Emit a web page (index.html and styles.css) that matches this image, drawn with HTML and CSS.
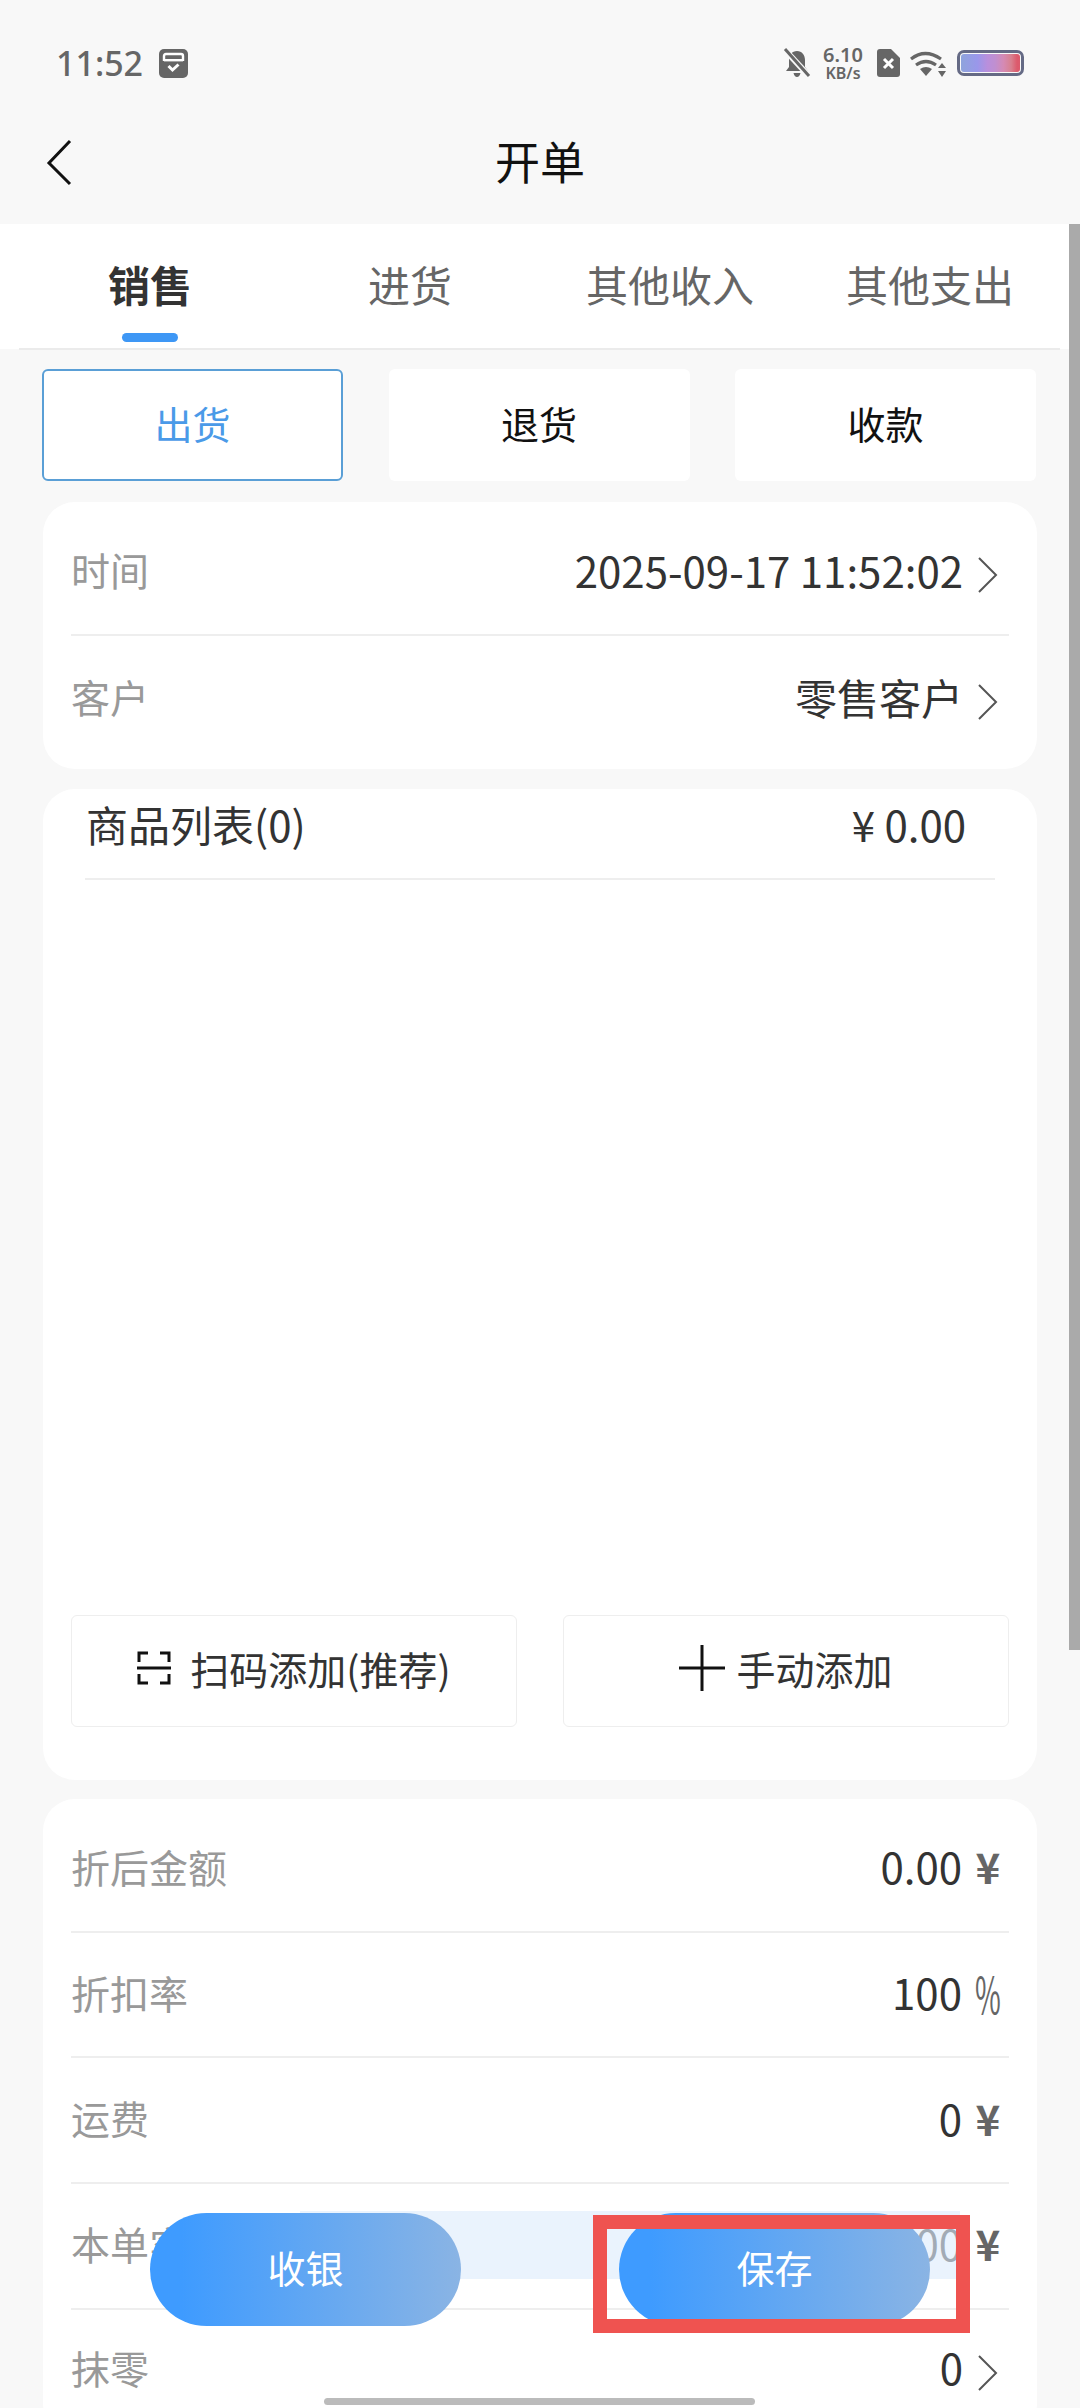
FILE: index.html
```html
<!DOCTYPE html>
<html lang="zh-CN">
<head>
    <meta charset="UTF-8">
    <meta name="viewport" content="width=device-width, initial-scale=1.0">
    <title>开单</title>
    <link rel="stylesheet" href="styles.css">
</head>
<body>
<div class="page">

    <div class="status">
        <div class="status-left">
            <span class="clock">11:52</span>
            <svg class="ic-box" width="29" height="29" viewBox="0 0 29 29">
                <rect width="29" height="29" rx="5" fill="#666"/>
                <path d="M5 12V7q0-2 2-2h15q2 0 2 2v5" fill="none" stroke="#fff" stroke-width="2.4"/>
                <rect x="5" y="10" width="19" height="2.4" fill="#fff"/>
                <path d="M9.5 17l4 4 6-5.5" fill="none" stroke="#fff" stroke-width="3"/>
            </svg>
        </div>
        <div class="status-right">
            <svg class="ic-bell" width="28" height="30" viewBox="0 0 28 30">
                <path d="M14 3c5 0 8 4 8 9v7l3 4H3l3-4v-7c0-5 3-9 8-9zM10.5 25h7q-1 4-3.500 4t-3.500-4z" fill="#666"/>
                <path d="M2 2l24 26" stroke="#f8f8f8" stroke-width="6"/>
                <path d="M2 1l24 27" stroke="#666" stroke-width="3"/>
            </svg>
            <div class="speed"><span class="speed-num">6.10</span><span class="speed-unit">KB/s</span></div>
            <svg class="ic-sim" width="23" height="28" viewBox="0 0 23 28">
                <path d="M3 0h11l9 9v16q0 3-3 3H3q-3 0-3-3V3q0-3 3-3z" fill="#666"/>
                <path d="M7 10l9 9M16 10l-9 9" stroke="#fff" stroke-width="3"/>
            </svg>
            <svg class="ic-wifi" width="36" height="27" viewBox="0 0 36 27">
                <g fill="none" stroke="#666" stroke-width="3.200">
                    <path d="M1 9q14-11 30 0"/>
                    <path d="M6 15q10-7 20 0"/>
                </g>
                <path d="M10 19q6-4 12 0l-6 7z" fill="#666"/>
                <path d="M32 13l4 5h-8zM32 27l4-6h-8z" fill="#666"/>
            </svg>
            <div class="battery"><div class="battery-fill"></div></div>
        </div>
    </div>

    <div class="nav">
        <svg class="back" width="26" height="47" viewBox="0 0 26 47">
            <path d="M24 2L3 24l21 21" fill="none" stroke="#111" stroke-width="3"/>
        </svg>
        <span class="nav-title">开单</span>
    </div>

    <div class="tabs">
        <div class="tab tab-on">销售<i class="tab-line"></i></div>
        <div class="tab">进货</div>
        <div class="tab">其他收入</div>
        <div class="tab">其他支出</div>
    </div>

    <div class="subtabs">
        <div class="subtab subtab-on">出货</div>
        <div class="subtab">退货</div>
        <div class="subtab">收款</div>
    </div>

    <div class="card card-top">
        <div class="row">
            <span class="label">时间</span>
            <span class="value">2025-09-17 11:52:02<svg class="chev" width="21" height="36" viewBox="0 0 21 36"><path d="M2 1l17 17L2 35" fill="none" stroke="#555" stroke-width="2"/></svg></span>
        </div>
        <div class="row row-last">
            <span class="label">客户</span>
            <span class="value">零售客户<svg class="chev" width="21" height="36" viewBox="0 0 21 36"><path d="M2 1l17 17L2 35" fill="none" stroke="#555" stroke-width="2"/></svg></span>
        </div>
    </div>

    <div class="card card-goods">
        <div class="goods-head">
            <span>商品列表(0)</span>
            <span>¥ 0.00</span>
        </div>
        <div class="goods-btns">
            <div class="add-btn add-scan">
                <svg width="34" height="34" viewBox="0 0 34 34">
                    <path d="M11 2H2v9M23 2h9v9M11 32H2v-9M23 32h9v-9" fill="none" stroke="#111" stroke-width="3"/>
                    <path d="M0 17h34" stroke="#111" stroke-width="3"/>
                </svg>
                扫码添加(推荐)
            </div>
            <div class="add-btn add-manual">
                <svg width="46" height="46" viewBox="0 0 46 46">
                    <path d="M0 23h46M23 0v46" stroke="#111" stroke-width="3"/>
                </svg>
                手动添加
            </div>
        </div>
    </div>

    <div class="card card-sum">
        <div class="row row-sum">
            <span class="label">折后金额</span>
            <span class="value">0.00<span class="unit">¥</span></span>
        </div>
        <div class="row row-sum">
            <span class="label">折扣率</span>
            <span class="value">100<span class="unit unit-pct">%</span></span>
        </div>
        <div class="row row-sum">
            <span class="label">运费</span>
            <span class="value">0<span class="unit">¥</span></span>
        </div>
        <div class="row row-sum">
            <span class="label">本单实收</span>
            <span class="value">0.00<span class="unit">¥</span></span>
        </div>
        <div class="row row-sum row-end">
            <span class="label">抹零</span>
            <span class="value">0<svg class="chev" width="21" height="36" viewBox="0 0 21 36"><path d="M2 1l17 17L2 35" fill="none" stroke="#555" stroke-width="2"/></svg></span>
        </div>
    </div>

    <!-- floating things over the list -->
    <div class="scrollbar"></div>
    <div class="band"></div>
    <div class="float-btn float-pay">收银</div>
    <div class="float-btn float-save">保存</div>
    <div class="mark"></div>
    <div class="home-bar"></div>
</div>
</body>
</html>
```

FILE: styles.css
```css
* {
    box-sizing: border-box;
    margin: 0;
    padding: 0;
}
body {
    background-color: #f8f8f8;
    font-family: "Noto Sans CJK SC", "Noto Sans", sans-serif;
    color: #333;
}
.page {
    position: relative;
    width: 1080px;
    height: 2408px;
    overflow: hidden;
}

/* status bar */
.status {
    height: 100px;
    padding: 48px 56px 0 56px;
    display: flex;
    justify-content: space-between;
    align-items: flex-start;
}
.status-left {
    display: flex;
    align-items: center;
    gap: 16px;
    height: 30px;
}
.clock {
    font-family: "Noto Sans", sans-serif;
    font-size: 34px;
    font-weight: 500;
    color: #666;
    line-height: 30px;
}
.status-right {
    display: flex;
    align-items: center;
    height: 30px;
}
.speed {
    width: 42px;
    margin: 0 13px 0 11px;
    display: flex;
    flex-direction: column;
    align-items: center;
    font-family: "Noto Sans", sans-serif;
    color: #666;
    font-weight: 600;
}
.speed-num {
    font-size: 20px;
    line-height: 20px;
}
.speed-unit {
    font-size: 16px;
    line-height: 16px;
}
.ic-wifi {
    margin-left: 10px;
}
.battery {
    width: 67px;
    height: 26px;
    margin-left: 11px;
    border: 3px solid #656a85;
    border-radius: 7px;
    padding: 1px;
}
.battery-fill {
    height: 100%;
    border-radius: 3px;
    background: linear-gradient(90deg, #8ea4dc, #9a97ea 28%, #b98fdc 45%, #c08fd0 58%, #d58ab4 72%, #d8808f 85%, #dc5a6c 95%);
}

/* title */
.nav {
    position: relative;
    height: 124px;
    display: flex;
    align-items: center;
    justify-content: center;
}
.back {
    position: absolute;
    left: 46px;
    top: 39px;
}
.nav-title {
    font-size: 45px;
    color: #111;
    line-height: 122px;
    padding-bottom: 2px;
}

/* tabs */
.tabs {
    width: 1069px;
    height: 125px;
    padding: 0 9px 0 20px;
    background-color: #fff;
    display: flex;
    align-items: stretch;
}
.tabs::after {
    content: "";
    position: absolute;
    left: 19px;
    top: 348px;
    width: 1041px;
    height: 2px;
    background-color: #ebebeb;
}
.tab {
    position: relative;
    width: 260px;
    padding-top: 29px;
    text-align: center;
    font-size: 42px;
    line-height: 62px;
    color: #666;
}
.tab-on {
    font-weight: 700;
    color: #333;
}
.tab-line {
    position: absolute;
    left: 102px;
    top: 109px;
    width: 56px;
    height: 9px;
    border-radius: 5px;
    background-color: #3e97f5;
}

.subtabs {
    width: 994px;
    margin: 20px 0 0 42px;
    display: flex;
    justify-content: space-between;
}
.subtab {
    width: 301px;
    height: 112px;
    padding-bottom: 6px;
    border-radius: 6px;
    background-color: #fff;
    color: #111;
    font-size: 38px;
    display: flex;
    align-items: center;
    justify-content: center;
}
.subtab-on {
    border: 2px solid #5a9fd6;
    color: #4a9ae8;
}

/* cards */
.card {
    width: 994px;
    margin-left: 43px;
    background-color: #fff;
    border-radius: 32px;
}
.card-top {
    margin-top: 21px;
    padding: 8px 28px 7px;
}
.row {
    height: 126px;
    padding-bottom: 6px;
    display: flex;
    align-items: center;
    justify-content: space-between;
    border-bottom: 2px solid #eeeeee;
}
.row-last {
    border-bottom: none;
}
.label {
    font-size: 39px;
    color: #999;
}
.value {
    font-size: 42px;
    color: #333;
    display: flex;
    align-items: center;
}
.chev {
    margin: 12px 11px 0 14px;
}
.card-goods {
    height: 991px;
    margin-top: 20px;
    padding: 0 28px 53px;
    display: flex;
    flex-direction: column;
    justify-content: space-between;
}
.goods-head {
    height: 91px;
    margin: 0 14px;
    padding: 0 29px 20px 1px;
    border-bottom: 2px solid #eeeeee;
    font-size: 42px;
    display: flex;
    align-items: center;
    justify-content: space-between;
}
.goods-btns {
    display: flex;
    justify-content: space-between;
}
.add-btn {
    width: 446px;
    height: 112px;
    padding-bottom: 6px;
    border: 1px solid #eeeeee;
    border-radius: 6px;
    font-size: 39px;
    display: flex;
    align-items: center;
    justify-content: center;
}
.add-scan svg {
    margin-right: 19px;
}
.add-manual svg {
    margin-right: 11px;
}
.card-sum {
    margin-top: 19px;
    padding: 8px 28px 0;
}
.row-sum {
    height: 125.7px;
}
.row-end {
    padding-bottom: 12px;
    border-bottom: none;
}
.unit {
    width: 26px;
    margin: 0 8px 0 13px;
    font-size: 42px;
    font-weight: 700;
    color: #666;
    text-align: center;
}
.unit-pct {
    font-size: 28px;
    font-weight: 400;
    transform: scaleY(1.8);
}

/* floating */
.scrollbar {
    position: absolute;
    left: 1069px;
    top: 224px;
    width: 11px;
    height: 1426px;
    background-color: #aaaaaa;
}
.band {
    position: absolute;
    left: 300px;
    top: 2211px;
    width: 660px;
    height: 68px;
    background-color: rgba(222, 236, 252, 0.65);
}
.float-btn {
    position: absolute;
    top: 2213px;
    width: 311px;
    height: 113px;
    padding-bottom: 6px;
    border-radius: 57px;
    background: linear-gradient(90deg, #3e9bff 10%, #8ab4e4);
    color: #fff;
    font-size: 38px;
    display: flex;
    align-items: center;
    justify-content: center;
}
.float-pay {
    left: 150px;
}
.float-save {
    left: 619px;
}
.mark {
    position: absolute;
    left: 593px;
    top: 2215px;
    width: 377px;
    height: 118px;
    border: 14px solid #ef5350;
}
.home-bar {
    position: absolute;
    left: 324px;
    top: 2398px;
    width: 431px;
    height: 7px;
    border-radius: 4px;
    background-color: #bbbbbb;
}
```
